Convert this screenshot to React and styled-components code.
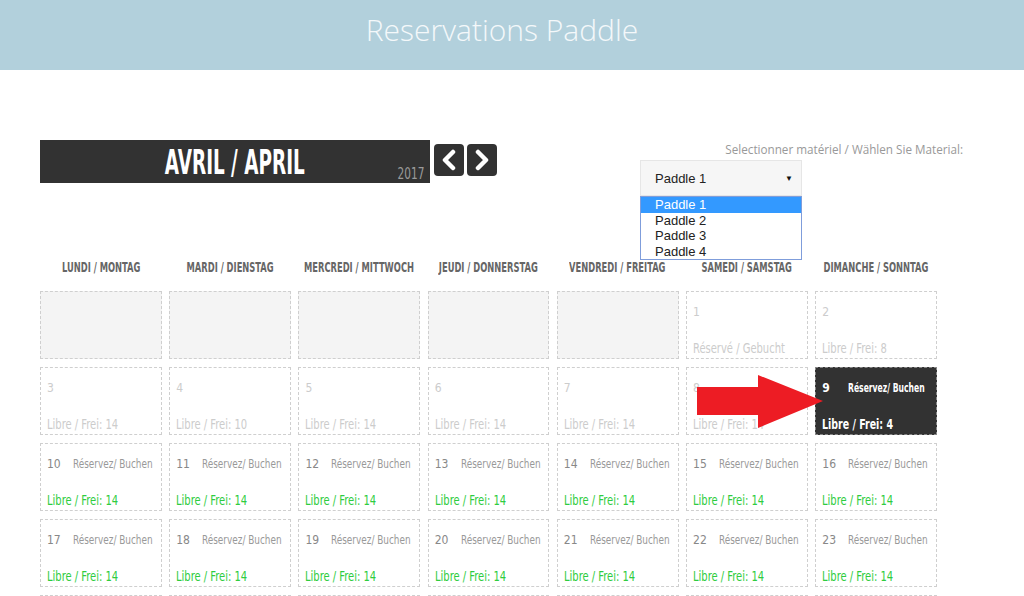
import styled, { createGlobalStyle } from "styled-components";

const GlobalStyle = createGlobalStyle`
  html, body {
    margin: 0;
    padding: 0;
    background: #fff;
    overflow: hidden;
  }
  body {
    font-family: "Open Sans", "Liberation Sans", sans-serif;
  }
`;

const NARROW = `"DejaVu Sans Condensed", "Liberation Sans", sans-serif`;

const DAYS = [
  "Lundi / Montag",
  "Mardi / Dienstag",
  "Mercredi / Mittwoch",
  "Jeudi / Donnerstag",
  "Vendredi / Freitag",
  "Samedi / Samstag",
  "Dimanche / Sonntag",
];

const FREE = { 2: 8, 3: 14, 4: 10, 5: 14, 6: 14, 7: 14, 8: 14, 9: 4 };

const buildWeeks = () => {
  const cells = [];
  for (let i = 0; i < 5; i++) cells.push({ empty: true });
  for (let d = 1; d <= 30; d++) {
    let state = "open";
    if (d < 9) state = "past";
    if (d === 9) state = "today";
    cells.push({ day: d, state, free: FREE[d] ?? 14 });
  }
  return cells;
};

const App = () => {
  const cells = buildWeeks();
  return (
    <>
      <GlobalStyle />
      <Header>
        <Title>Reservations Paddle</Title>
      </Header>
      <Main>
        <Toolbar>
          <MonthGroup>
            <MonthBar>
              <span />
              <MonthName>Avril / April</MonthName>
              <Year>2017</Year>
            </MonthBar>
            <NavButton aria-label="previous">
              <svg width="18" height="22" viewBox="0 0 18 22">
                <polyline points="13,3 5,11 13,19" fill="none" stroke="#fff" strokeWidth="4.5" strokeLinecap="round" strokeLinejoin="round" />
              </svg>
            </NavButton>
            <NavButton aria-label="next">
              <svg width="18" height="22" viewBox="0 0 18 22">
                <polyline points="5,3 13,11 5,19" fill="none" stroke="#fff" strokeWidth="4.5" strokeLinecap="round" strokeLinejoin="round" />
              </svg>
            </NavButton>
          </MonthGroup>
          <Picker>
            <PickerLabel>Selectionner matériel / Wählen Sie Material:</PickerLabel>
            <SelectWrap>
              <SelectBox>
                <span>Paddle 1</span>
                <Caret>▼</Caret>
              </SelectBox>
              <Options>
                {["Paddle 1", "Paddle 2", "Paddle 3", "Paddle 4"].map((p, i) => (
                  <Option key={p} $active={i === 0}>{p}</Option>
                ))}
              </Options>
            </SelectWrap>
          </Picker>
        </Toolbar>

        <WeekHead>
          {DAYS.map((d) => (
            <DayCol key={d}>
              <DayName>{d}</DayName>
            </DayCol>
          ))}
        </WeekHead>

        <GridWrap>
          <Grid>
            {cells.map((c, i) =>
              c.empty ? (
                <Cell key={i} $empty />
              ) : (
                <Cell key={i} $state={c.state}>
                  <CellTop>
                    <DayNum $state={c.state}>{c.day}</DayNum>
                    {c.state !== "past" && <Book $state={c.state}>Réservez/ Buchen</Book>}
                  </CellTop>
                  <Free $state={c.state}>
                    {c.day === 1 ? "Réservé / Gebucht" : `Libre / Frei: ${c.free}`}
                  </Free>
                </Cell>
              )
            )}
          </Grid>
          <Arrow width="130" height="56" viewBox="0 0 130 56">
            <polygon points="0,12 61,12 61,0 126,26 61,53 61,40 0,40" fill="#ed1c24" />
          </Arrow>
        </GridWrap>
      </Main>
    </>
  );
};

export default App;

const Header = styled.header`
  height: 70px;
  background: #b2d0dc;
  display: flex;
  align-items: center;
  justify-content: center;
`;

const Title = styled.h1`
  margin: 0 20px 12px 0;
  font-family: "Open Sans", sans-serif;
  font-weight: 300;
  font-size: 30px;
  color: #f4f8fa;
`;

const Main = styled.main`
  padding: 70px 0 0 40px;
`;

const Toolbar = styled.div`
  width: 923px;
  display: flex;
  justify-content: space-between;
  align-items: flex-start;
  height: 56px;
`;

const MonthGroup = styled.div`
  display: flex;
  align-items: flex-start;
  gap: 3px;
`;

const MonthBar = styled.div`
  width: 390px;
  height: 43px;
  background: #323232;
  display: grid;
  grid-template-columns: 1fr auto 1fr;
  align-items: center;
  margin-right: 1px;
  overflow: hidden;
`;

const MonthName = styled.span`
  font-family: ${NARROW};
  font-weight: 700;
  font-size: 33px;
  line-height: 43px;
  text-transform: uppercase;
  color: #fff;
  display: inline-block;
  transform: scaleX(0.62);
  margin: 1px -44px 0;
`;

const Year = styled.span`
  justify-self: end;
  align-self: end;
  margin: 0 6px 1px 0;
  font-family: ${NARROW};
  font-size: 15px;
  color: #9a9a9a;
  display: inline-block;
  transform: scaleX(0.78);
  transform-origin: right;
`;

const NavButton = styled.button`
  width: 30px;
  height: 32px;
  margin-top: 4px;
  padding: 0;
  border: none;
  border-radius: 4px;
  background: #323232;
  display: flex;
  align-items: center;
  justify-content: center;
`;

const Picker = styled.div`
  width: 323px;
  margin-top: 1px;
  display: flex;
  flex-direction: column;
`;

const PickerLabel = styled.div`
  text-align: right;
  font-size: 11.7px;
  line-height: 17px;
  color: #999;
`;

const SelectWrap = styled.div`
  position: relative;
  margin-top: 2px;
  width: 162px;
`;

const SelectBox = styled.div`
  height: 36px;
  box-sizing: border-box;
  border: 1px solid #e6e6e6;
  background: #f6f6f6;
  display: flex;
  align-items: center;
  justify-content: space-between;
  padding: 0 8px 0 14px;
  font-family: "Liberation Sans", Arial, sans-serif;
  font-size: 13px;
  color: #222;
`;

const Caret = styled.span`
  font-size: 8px;
  color: #111;
`;

const Options = styled.ul`
  position: absolute;
  top: 36px;
  left: 0;
  width: 162px;
  box-sizing: border-box;
  margin: 0;
  padding: 0;
  list-style: none;
  background: #fff;
  border: 1px solid #7f9ddb;
  z-index: 2;
`;

const Option = styled.li`
  height: 15.5px;
  line-height: 15px;
  padding-left: 14px;
  font-family: "Liberation Sans", Arial, sans-serif;
  font-size: 13px;
  color: ${(p) => (p.$active ? "#fff" : "#222")};
  background: ${(p) => (p.$active ? "#3399ff" : "transparent")};
`;

const WeekHead = styled.div`
  width: 897px;
  margin-top: 62px;
  display: grid;
  grid-template-columns: repeat(7, minmax(0, 1fr));
  column-gap: 7.5px;
`;

const DayCol = styled.div`
  min-width: 0;
  display: flex;
  justify-content: center;
`;

const DayName = styled.span`
  flex: none;
  display: inline-block;
  font-family: ${NARROW};
  font-weight: 700;
  font-size: 14.5px;
  text-transform: uppercase;
  color: #666;
  line-height: 18px;
  white-space: nowrap;
  transform: scaleX(0.64);
`;

const GridWrap = styled.div`
  position: relative;
  margin-top: 15px;
  width: 897px;
`;

const Grid = styled.div`
  display: grid;
  grid-template-columns: repeat(7, minmax(0, 1fr));
  grid-auto-rows: 68px;
  column-gap: 7.5px;
  row-gap: 8px;
`;

const Cell = styled.div`
  min-width: 0;
  box-sizing: border-box;
  border: 1px dashed ${(p) => (p.$state === "today" ? "#888" : "#cfcfcf")};
  background: ${(p) =>
    p.$empty ? "#f4f4f4" : p.$state === "today" ? "#323232" : "#fff"};
  padding: 12px 6px 1px;
  display: flex;
  flex-direction: column;
  justify-content: space-between;
  align-items: flex-start;
  font-family: ${NARROW};
  white-space: nowrap;
`;

const CellTop = styled.div`
  display: flex;
  align-items: center;
  height: 16px;
`;

const DayNum = styled.span`
  flex: none;
  width: 26px;
  font-size: 12px;
  color: ${(p) =>
    p.$state === "past" ? "#cccccc" : p.$state === "today" ? "#fff" : "#888"};
  font-weight: ${(p) => (p.$state === "today" ? 700 : 400)};
`;

const Book = styled.span`
  flex: none;
  display: inline-block;
  font-size: 11.5px;
  transform: scaleX(${(p) => (p.$state === "today" ? 0.74 : 0.86)});
  transform-origin: left;
  color: ${(p) => (p.$state === "today" ? "#fff" : "#999")};
  font-weight: ${(p) => (p.$state === "today" ? 700 : 400)};
`;

const Free = styled.span`
  display: inline-block;
  font-size: 13.5px;
  line-height: 18px;
  transform: scaleX(${(p) => (p.$state === "today" ? 0.78 : 0.82)});
  transform-origin: left;
  color: ${(p) =>
    p.$state === "past" ? "#cccccc" : p.$state === "today" ? "#fff" : "#2ecc40"};
  font-weight: ${(p) => (p.$state === "today" ? 700 : 400)};
`;

const Arrow = styled.svg`
  position: absolute;
  left: 657px;
  top: 84px;
`;
